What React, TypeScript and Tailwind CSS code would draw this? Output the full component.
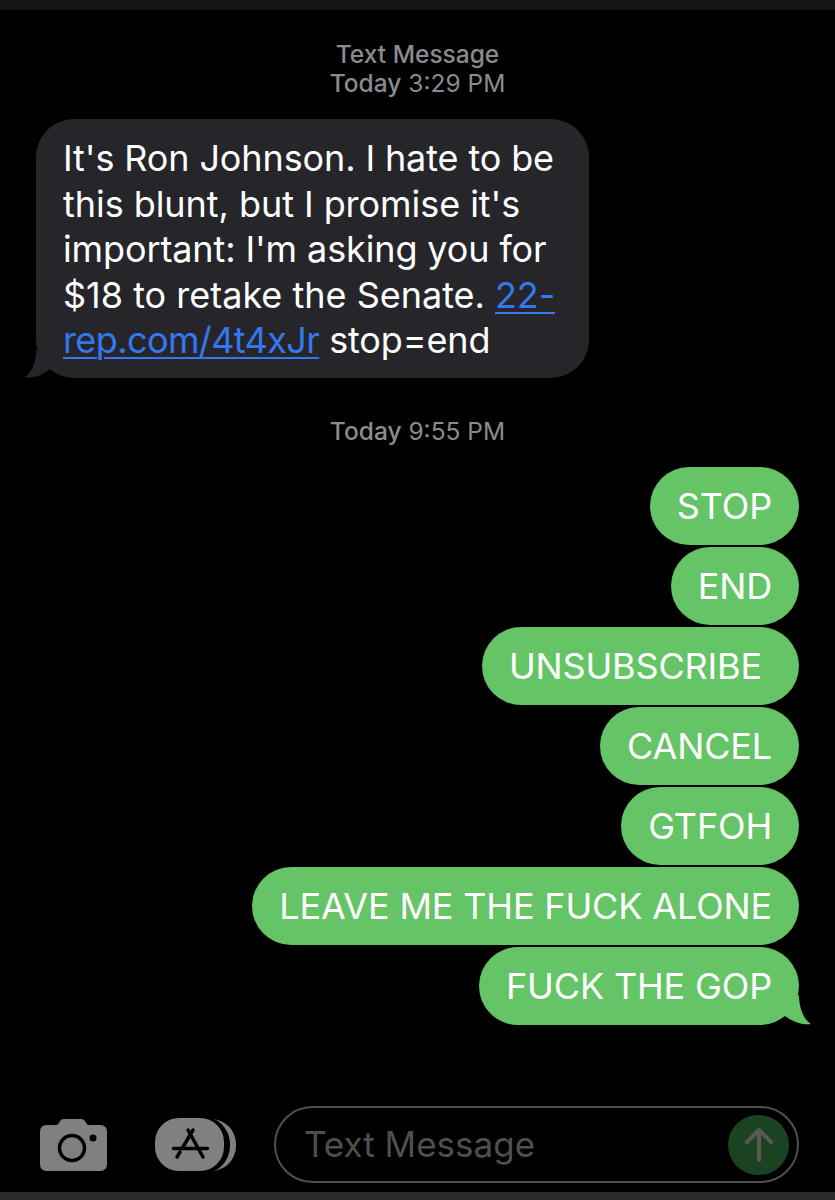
const greens = ["STOP", "END", "UNSUBSCRIBE ", "CANCEL", "GTFOH", "LEAVE ME THE FUCK ALONE", "FUCK THE GOP"];

function Stamp({ day, time }: { day: string; time: string }) {
  return (
    <div className="text-center text-[24.5px] leading-[29px] text-[#8b8b8e]">
      <span className="font-medium">{day}</span> {time}
    </div>
  );
}

export default function App() {
  return (
    <div className="flex h-[1200px] w-[835px] flex-col overflow-hidden bg-black font-['Inter',sans-serif]">
      <div className="h-[10px] bg-[#141414]" />
      <div className="pt-[30px] text-center text-[24.5px] font-medium leading-[29px] text-[#8b8b8e]">Text Message</div>
      <Stamp day="Today" time="3:29 PM" />
      <div className="relative ml-[36px] mt-[21px] w-[553px] rounded-[38px] bg-[#26262a] pb-[14px] pl-[27px] pr-[20px] pt-[17px] text-[36px] leading-[45.5px] tracking-[-0.12px] text-white">
        <svg className="absolute bottom-0 left-[-12px]" width="30" height="30" viewBox="0 0 30 30">
          <path d="M12 2 C12 14 8 25 0.5 29 C8 30.5 18 28 26 21 L30 10 Z" fill="#26262a" />
        </svg>
        <div className="relative">It's Ron Johnson. I hate to be</div>
        <div className="relative tracking-[-0.05px]">this blunt, but I promise it's</div>
        <div className="relative">important: I'm asking you for</div>
        <div className="relative">
          <span className="tracking-[0px]">$18 to retake the Senate.</span>{" "}
          <span className="text-[#3478f0] underline decoration-2 underline-offset-4">22-</span>
        </div>
        <div className="relative">
          <span className="tracking-[-0.6px] text-[#3478f0] underline decoration-2 underline-offset-4">rep.com/4t4xJr</span> stop=end
        </div>
      </div>
      <div className="mt-[39px]">
        <Stamp day="Today" time="9:55 PM" />
      </div>
      <div className="mt-[21px] flex flex-col items-end gap-[2px] pr-[36px]">
        {greens.map((t, i) => (
          <div
            key={t}
            className="relative flex h-[78px] items-center whitespace-pre rounded-[39px] bg-[#65c466] px-[27px] text-[36px] tracking-[-0.15px] text-white"
          >
            {i === greens.length - 1 && (
              <svg className="absolute bottom-0 right-[-12px]" width="30" height="30" viewBox="0 0 30 30">
                <path d="M18 0 C18 12 22 24 30 29 C22 30.5 12 27 4 21 L0 10 Z" fill="#65c466" />
              </svg>
            )}
            <span className="relative">{t}</span>
          </div>
        ))}
      </div>
      <div className="mt-auto flex h-[77px] items-center pl-[40px] pr-[36px]">
        <svg width="67" height="52" viewBox="0 0 67 52" className="shrink-0">
          <path
            d="M7 6 H16 Q18 6 19 4 L20 2 Q21 0 24 0 H41 Q44 0 45 2 L46 4 Q47 6 49 6 H60 Q67 6 67 13 V45 Q67 52 60 52 H7 Q0 52 0 45 V13 Q0 6 7 6 Z"
            fill="#808080"
          />
          <circle cx="32" cy="29" r="12.5" fill="none" stroke="#000" strokeWidth="3.5" />
          <circle cx="53" cy="19" r="3.5" fill="#000" />
        </svg>
        <svg width="82" height="54" viewBox="0 0 82 54" className="ml-[48px] shrink-0">
          <rect x="12" y="1" width="69" height="52" rx="25" fill="#808080" />
          <rect x="3" y="-2" width="72" height="58" rx="28" fill="#000" />
          <rect x="0" y="0" width="69" height="53" rx="24" fill="#808080" />
          <path
            d="M38 12 L28 29 M33 12 L48 39 M18.5 30.5 H52.5 M25 34 L22 39"
            fill="none"
            stroke="#000"
            strokeWidth="3.5"
            strokeLinecap="round"
          />
        </svg>
        <div className="ml-[37px] flex h-[77px] min-w-0 flex-1 items-center justify-between rounded-[39px] border-2 border-[#505050] pl-[28px] pr-[8px]">
          <span className="text-[35px] text-[#4f4f4f]">Text Message</span>
          <div className="flex h-[60px] w-[61px] items-center justify-center rounded-full bg-[#1b4321]">
            <svg width="30" height="36" viewBox="0 0 30 36">
              <path d="M15 33 V4 M3 15 L15 3 L27 15" fill="none" stroke="#595959" strokeWidth="4" strokeLinecap="round" strokeLinejoin="round" />
            </svg>
          </div>
        </div>
      </div>
      <div className="mt-[9px] h-[8px] bg-[#2a2a2a]" />
    </div>
  );
}
